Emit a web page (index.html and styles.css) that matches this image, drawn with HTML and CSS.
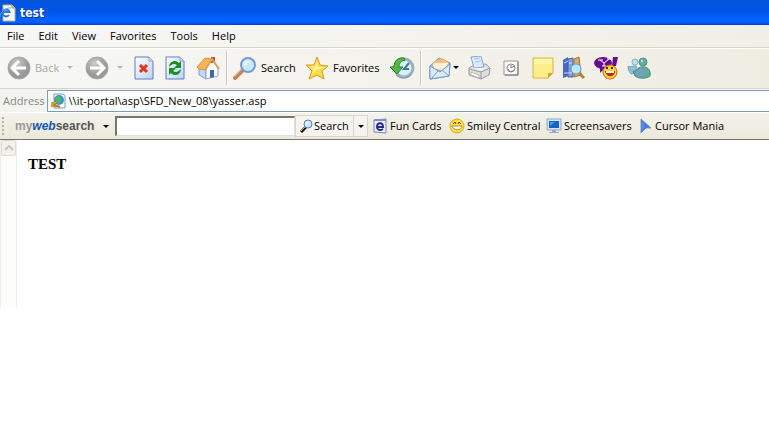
FILE: index.html
```html
<!DOCTYPE html>
<html lang="en">
<head>
<meta charset="utf-8">
<title>test</title>
<link rel="stylesheet" href="styles.css">
</head>
<body>
<header class="titlebar">
  <svg class="page-icon" width="16" height="18" viewBox="0 0 16 18" aria-hidden="true"><path d="M3 1h9l3 3v13H3z" fill="#f7f7ef" stroke="#b8b18d"/><path d="M12 1v3h3" fill="#d8d0a0" stroke="#a39c72"/><path d="M9 11A3.500 3.500 0 1 1 9.500 8H3" fill="none" stroke="#2878cf" stroke-width="2"/><path d="M0 13C-1 9 6 3 11 4" fill="none" stroke="#68aee8"/></svg>
  <h1 class="title">test</h1>
</header>
<nav class="menubar">
  <button>File</button><button>Edit</button><button>View</button><button>Favorites</button><button>Tools</button><button>Help</button>
</nav>
<div class="toolbar" role="toolbar" aria-label="Navigation">
  <button class="tool back" disabled>
    <svg width="24" height="24" viewBox="0 0 24 24" aria-hidden="true"><defs><radialGradient id="gray" cx=".4" cy=".3"><stop stop-color="#ccc"/><stop offset="1" stop-color="#999"/></radialGradient></defs><circle cx="12" cy="12" r="11" fill="url(#gray)" stroke="#a8a8a8"/><path d="M12 5l-7 7 7 7M6 12h13" fill="none" stroke="#fff" stroke-width="3"/></svg>
    <span>Back</span><i class="caret pale"></i>
  </button>
  <button class="tool forward" disabled aria-label="Forward">
    <svg width="24" height="24" viewBox="0 0 24 24" aria-hidden="true"><circle cx="12" cy="12" r="11" fill="url(#gray)" stroke="#a8a8a8"/><path d="M12 5l7 7-7 7M18 12H5" fill="none" stroke="#fff" stroke-width="3"/></svg><i class="caret pale"></i>
  </button>
  <button class="tool page-tool" aria-label="Stop"><svg width="20" height="24" viewBox="0 0 20 24" aria-hidden="true"><defs><linearGradient id="paper" x1="0" y1="0" x2="1" y2="1"><stop stop-color="#fff"/><stop offset="1" stop-color="#bfd2f5"/></linearGradient></defs><path d="M1 1h14l4 4v18H1z" fill="url(#paper)" stroke="#5f7bc0"/><path d="M15 1v4h4" fill="#dce7fa" stroke="#8b9bc7"/><path d="M6 9l7 7M13 9l-7 7" stroke="#e8331c" stroke-width="3"/></svg></button>
  <button class="tool page-tool" aria-label="Refresh"><svg width="20" height="24" viewBox="0 0 20 24" aria-hidden="true"><path d="M1 1h14l4 4v18H1z" fill="url(#paper)" stroke="#5f7bc0"/><path d="M15 1v4h4" fill="#dce7fa" stroke="#8b9bc7"/><path d="M4 11c0-6 7-8 10-4l2-2v7H9l3-3c-3-2-5-1-8 2z" fill="#159322"/><path d="M16 13c0 6-7 8-10 4l-2 2v-7h7l-3 3c3 2 5 1 8-2z" fill="#159322"/></svg></button>
  <button class="tool home" aria-label="Home"><svg width="24" height="24" viewBox="0 0 24 24" aria-hidden="true"><path d="M3 12l7-1v12l-7-4z" fill="#c3d8f5" stroke="#86a3d2"/><path d="M10 12l6-8 6 8v8l-12 3z" fill="#f7fbff" stroke="#8aa6d6"/><path d="M15 1h4v6h-4z" fill="#b9532c"/><path d="M1 11L9 2l7 1-7 11-6-1z" fill="#fab55c" stroke="#d9903f"/><path d="M9 14l7-11 7 10" fill="none" stroke="#dca05d" stroke-width="2"/><path d="M14 14h4v7l-4 1z" fill="#4464a5"/></svg></button>
  <span class="divider"></span>
  <button class="tool search">
    <svg width="24" height="24" viewBox="0 0 24 24" aria-hidden="true"><path d="M2 22l8-8" stroke="#c58555" stroke-width="4" stroke-linecap="round"/><path d="M2 20l7-7" stroke="#e6b78e"/><circle cx="15" cy="9" r="7" fill="#c9eafd" stroke="#7999ce" stroke-width="2"/><path d="M11 9c0-3 2-4 5-4-1 3-2 4-5 4z" fill="#fff"/></svg>
    <span>Search</span>
  </button>
  <button class="tool favorites">
    <svg width="24" height="24" viewBox="0 0 24 24" aria-hidden="true"><path d="M12 1l3 8 8 1-6 5 2 8-7-4-8 4 3-8-6-6 8 0z" fill="#ffdc45" stroke="#d39a24"/><path d="M12 4l1 7 7 0-8 3-6 5 3-6-5-3 6 0z" fill="#fff08d"/></svg>
    <span>Favorites</span>
  </button>
  <button class="tool history" aria-label="History"><svg width="25" height="24" viewBox="0 0 25 24" aria-hidden="true"><circle cx="14" cy="12" r="9" fill="#d9effa" stroke="#9bb0be" stroke-width="3"/><path d="M19 7l-5 6h5" fill="none" stroke="#477795" stroke-width="2"/><path d="M14 2C8 1 4 5 4 11H0l7 7 6-7H9c0-4 2-6 6-7z" fill="#55b747" stroke="#26832b"/><path d="M6 19c4 4 11 4 15 0" fill="none" stroke="#8297a5"/></svg></button>
  <span class="divider"></span>
  <button class="tool mail" aria-label="Mail"><svg width="22" height="24" viewBox="0 0 22 24" aria-hidden="true"><path d="M1 10l9-8 11 5-1 13-19 3z" fill="#a9c9ee" stroke="#6b8dc4"/><path d="M3 8l9-6 8 5-5 8-10-2z" fill="#fff1d9" stroke="#e1a268"/><path d="M4 7l8-5 6 5z" fill="#f6bd7c"/><path d="M1 10l10 6 10-8-1 12-19 3z" fill="#d9edfd" stroke="#6f9bd1"/><path d="M2 23l7-8M20 20l-7-6" stroke="#6f9bd1"/></svg><i class="caret"></i></button>
  <button class="tool printer" aria-label="Print"><svg width="24" height="24" viewBox="0 0 24 24" aria-hidden="true"><path d="M2 12l5-3 12-1 4 4-1 7-8 4-12-4z" fill="#dddfe1" stroke="#9a9da1"/><path d="M4 1l10-1 3 11-10 1z" fill="#dcebff" stroke="#84a6d9"/><path d="M7 3l6-1M8 6l6-1" stroke="#a5c0e6"/><path d="M2 13l12 3 9-4M14 16v7" fill="none" stroke="#999"/><path d="M4 16l8 3v3l-8-3z" fill="#fff" stroke="#b5b5b5"/><path d="M5 12l11 0 4-1-6 4z" fill="#f7f7f7"/></svg></button>
  <button class="tool messenger" aria-label="Discuss"><svg width="16" height="16" viewBox="0 0 16 16" aria-hidden="true"><path d="M1 1h14v14H1z" fill="#f8f8f8" stroke="#999"/><path d="M2 15h13V2" fill="none" stroke="#777"/><circle cx="8" cy="8" r="4" fill="#fff" stroke="#888"/><path d="M8 5v3l3-2M5 9c1 3 4 3 6 1" fill="none" stroke="#777"/></svg></button>
  <button class="tool note" aria-label="Note"><svg width="22" height="22" viewBox="0 0 22 22" aria-hidden="true"><path d="M1 1h20v15l-5 5H1z" fill="#ffed8a" stroke="#ddb23d"/><path d="M21 16h-5v5z" fill="#d7a52c"/><path d="M2 2h18v5H2z" fill="#fff6a8"/></svg></button>
  <button class="tool research" aria-label="Research"><svg width="24" height="24" viewBox="0 0 24 24" aria-hidden="true"><path d="M1 4l5-3v19l-5 2z" fill="#4867ba"/><path d="M6 3l5-1v19H6z" fill="#839de0" stroke="#475faa"/><path d="M12 3l5-2 2 18-7 2z" fill="#d1af69" stroke="#977236"/><path d="M2 7l4-2M7 7h3M2 17h8" stroke="#cfddff"/><path d="M17 17l5 5" stroke="#bc803e" stroke-width="3"/><circle cx="14" cy="13" r="5" fill="#b8e8fb" stroke="#6b98c6"/></svg></button>
  <button class="tool yahoo" aria-label="Yahoo Messenger"><svg width="26" height="24" viewBox="0 0 26 24" aria-hidden="true"><ellipse cx="9" cy="7" rx="9" ry="6" fill="#680b91"/><path d="M6 11l0 6 5-5z" fill="#680b91"/><path d="M4 4h5M6 4l4 3 5-4M13 3h4M10 7v3M8 10h4" stroke="#fff" fill="none"/><path d="M19 1h5l-2 9h-4z" fill="#68108b"/><circle cx="16" cy="16" r="7" fill="#ffd132" stroke="#b66b18"/><path d="M11 15h10c0 7-9 7-10 0z" fill="#c32724"/><path d="M12 15h8v2h-8z" fill="#fff"/><path d="M13 11v2M18 11v2" stroke="#4b2811" stroke-width="2"/></svg></button>
  <button class="tool buddies" aria-label="Windows Messenger"><svg width="25" height="24" viewBox="0 0 25 24" aria-hidden="true"><circle cx="8" cy="6" r="3" fill="#bde0ef" stroke="#86b5c9"/><path d="M1 10c2 2 8-2 9 1l-1 6-5 1c-2-2-3-5-3-8z" fill="#8bbfda" stroke="#79a9c2"/><circle cx="16" cy="6" r="4" fill="#65ad98" stroke="#4b9282"/><path d="M6 15c4 1 4-4 9-4 7-1 9 5 8 9-4 3-11 3-15 0z" fill="#66aaa0" stroke="#47887f"/><path d="M8 19c2 0 4-7 8-7l-2 9z" fill="#789bd2"/><circle cx="15" cy="5" r="1" fill="#cdf2df"/></svg></button>
</div>
<form class="address-bar">
  <label for="address">Address</label>
  <div class="address-field">
    <svg width="16" height="16" viewBox="0 0 16 16" aria-hidden="true"><path d="M4 1h9l2 2v12H4z" fill="#fff" stroke="#7898bf"/><circle cx="9" cy="7" r="5" fill="#3a91d8"/><path d="M6 4l3-1 3 3-2 2 1 2-3 1-3-4z" fill="#54b65a"/><path d="M1 9h5v5H1z" fill="#d29b3d"/><path d="M4 12l6 2" stroke="#b57b28" stroke-width="2"/></svg>
    <input id="address" type="text" value="\\it-portal\asp\SFD_New_08\yasser.asp">
  </div>
</form>
<form class="links-bar">
  <span class="grip"></span>
  <button class="brand" type="button"><span><span class="my">my</span><em>web</em>search</span><i class="caret"></i></button>
  <input class="query" type="text" aria-label="Search the web">
  <div class="split">
    <button type="button"><svg width="14" height="14" viewBox="0 0 14 14" aria-hidden="true"><path d="M1 13l5-5" stroke="#171717" stroke-width="3"/><path d="M1 12l5-5" stroke="#e0a94d"/><circle cx="8" cy="5" r="4" fill="#c9edff" stroke="#5579b4"/><path d="M6 5l2-2" stroke="#fff"/></svg>Search</button>
    <button class="split-arrow" type="button" aria-label="Search options"><i class="caret"></i></button>
  </div>
  <a class="link fun" href="#"><svg width="14" height="16" viewBox="0 0 14 16" aria-hidden="true"><path d="M1 2l12-1v14l-12-1z" fill="#e8efff" stroke="#7587bd"/><path d="M1 1h12v2H1z" fill="#7d91c9"/><path d="M10 11c-3 2-6 1-6-2 0-5 6-5 6 0H5" fill="none" stroke="#2b287d" stroke-width="2"/></svg>Fun Cards</a>
  <a class="link smiley" href="#"><svg width="16" height="16" viewBox="0 0 16 16" aria-hidden="true"><circle cx="8" cy="8" r="7" fill="#ffe14a" stroke="#d8a916"/><path d="M3 8h10c0 5-9 5-10 0z" fill="#fff" stroke="#b08a32"/><path d="M4 6l2-2 1 2M9 6l1-2 2 2" fill="none" stroke="#654910"/></svg>Smiley Central</a>
  <a class="link savers" href="#"><svg width="16" height="16" viewBox="0 0 16 16" aria-hidden="true"><path d="M1 1h14v11H1z" fill="#d8e2f2" stroke="#8da7cd"/><path d="M3 3h10v7H3z" fill="#1765c2"/><path d="M4 4h5L4 8z" fill="#4aa1ea"/><path d="M6 12h4v2h3v1H3v-1h3z" fill="#9cabc3"/></svg>Screensavers</a>
  <a class="link cursor" href="#"><svg width="12" height="16" viewBox="0 0 12 16" aria-hidden="true"><path d="M1 1l10 9H6l-5 5z" fill="#4676d7" stroke="#7392d4"/><path d="M2 3v9l3-3z" fill="#5f8ee6"/></svg>Cursor Mania</a>
</form>
<main class="viewport">
  <aside class="scroll-track"><button aria-label="Scroll up" disabled><svg width="10" height="6" viewBox="0 0 10 6" aria-hidden="true"><path d="M1 5l4-4 4 4" fill="none" stroke="#c4c4be" stroke-width="2"/></svg></button></aside>
  <p class="document">TEST</p>
</main>
</body>
</html>
```

FILE: styles.css
```css
* { box-sizing: border-box; }
body {
  margin: 0;
  background: #fff;
  color: #000;
  font: 11px/16px "Open Sans", "Noto Sans", sans-serif;
}
button, input {
  font: inherit;
  color: inherit;
  margin: 0;
  padding: 0;
  border: 0;
  background: none;
  white-space: nowrap;
}
svg { display: block; flex: none; }

.titlebar {
  display: flex;
  align-items: center;
  gap: 4px;
  height: 25px;
  background: linear-gradient(#0b54d5, #0054e3 16%, #0054e3 45%, #0060fc 70%, #0063ff 88%, #0040c4);
}
.title {
  margin: 0;
  color: #fff;
  font: bold 12px/16px "DejaVu Sans Condensed", "Open Sans", sans-serif;
  text-shadow: 1px 1px #003398;
}

.menubar {
  display: flex;
  gap: 14px;
  height: 23px;
  padding: 0 7px;
  background: linear-gradient(90deg, #f7f7f6, #f0efe7);
  border-bottom: 1px solid #d8d6c5;
}

.toolbar {
  display: flex;
  align-items: center;
  height: 41px;
  padding: 0 0 2px 7px;
  border-top: 1px solid #fff;
  border-bottom: 1px solid #d5d4c7;
  background: linear-gradient(90deg, #f7f7f6, #efede2);
}
.tool {
  display: flex;
  align-items: center;
  flex: none;
  gap: 4px;
}
.tool:disabled { color: #aca899; }
.back { width: 78px; }
.back .caret { margin-left: 4px; }
.forward { width: 49px; gap: 8px; }
.page-tool { width: 31px; }
.home { width: 30px; }
.divider {
  flex: none;
  width: 2px;
  height: 34px;
  border-left: 1px solid #cbc8b8;
  border-right: 1px solid #fff;
}
.search { width: 77px; padding-left: 5px; }
.favorites { width: 85px; }
.history { width: 30px; }
.mail { width: 45px; padding-left: 7px; gap: 2px; }
.printer { width: 36px; }
.messenger { width: 29px; }
.note { width: 30px; }
.research { width: 32px; }
.yahoo { width: 33px; }

.caret {
  flex: none;
  width: 0;
  height: 0;
  border: 3px solid transparent;
  border-top-color: #000;
  border-bottom: 0;
}
.caret.pale { border-top-color: #b8b6ae; }

.address-bar {
  display: flex;
  align-items: center;
  gap: 2px;
  height: 23px;
  padding-left: 3px;
  background: #f3f3ef;
  color: #8b8982;
}
.address-field {
  display: flex;
  flex: 1;
  align-items: center;
  gap: 3px;
  height: 22px;
  padding-left: 2px;
  border: 1px solid #7f9db9;
  border-right: 0;
  background: #fff;
  color: #000;
}
.address-field input { flex: 1; min-width: 0; }

.links-bar {
  display: flex;
  align-items: center;
  height: 28px;
  padding: 0 4px 0 2px;
  border-top: 1px solid #fff;
  border-bottom: 1px solid #77756c;
  background: linear-gradient(#f3f2eb, #ebe9da);
}
.grip {
  flex: none;
  width: 13px;
  height: 18px;
  background: radial-gradient(circle at 1px 1px, #b7b4a4 1px, transparent 1px) 0 0 / 4px 4px repeat-y;
}
.brand {
  display: flex;
  flex: none;
  align-items: center;
  justify-content: space-between;
  width: 94px;
  color: #555;
  font: bold 12px/16px "Liberation Sans", sans-serif;
}
.brand .my { color: #999; }
.brand em { color: #1555b5; }
.query {
  flex: none;
  width: 180px;
  height: 20px;
  margin-left: 6px;
  background: #fff;
  border: 2px solid #77756c;
  border-right: 1px solid #ddd;
  border-bottom: 1px solid #ddd;
}
.split {
  display: flex;
  flex: none;
  width: 73px;
  height: 22px;
  border: 1px solid #d9d6c8;
  background: #f5f4ef;
}
.split button {
  display: flex;
  align-items: center;
  width: 57px;
  padding-left: 4px;
}
.split .split-arrow {
  width: 14px;
  border-left: 1px solid #d9d6c8;
}
.link {
  display: flex;
  flex: none;
  align-items: center;
  gap: 3px;
  color: #000;
  text-decoration: none;
  white-space: nowrap;
}
.fun { width: 81px; padding-left: 5px; }
.smiley { width: 97px; gap: 2px; }
.savers { width: 94px; gap: 2px; }

.viewport {
  display: flex;
  min-height: 168px;
}
.scroll-track {
  flex: none;
  width: 17px;
  border: 1px solid #eeeeea;
  border-width: 0 1px;
  background: #fdfdf9;
}
.scroll-track button {
  display: grid;
  place-items: center;
  width: 15px;
  height: 16px;
  border: 1px solid #dddcd4;
  border-radius: 2px;
  background: #f1f0ea;
}
.document {
  margin: 15px 11px;
  font: bold 15px/19px "Liberation Serif", serif;
}
```
